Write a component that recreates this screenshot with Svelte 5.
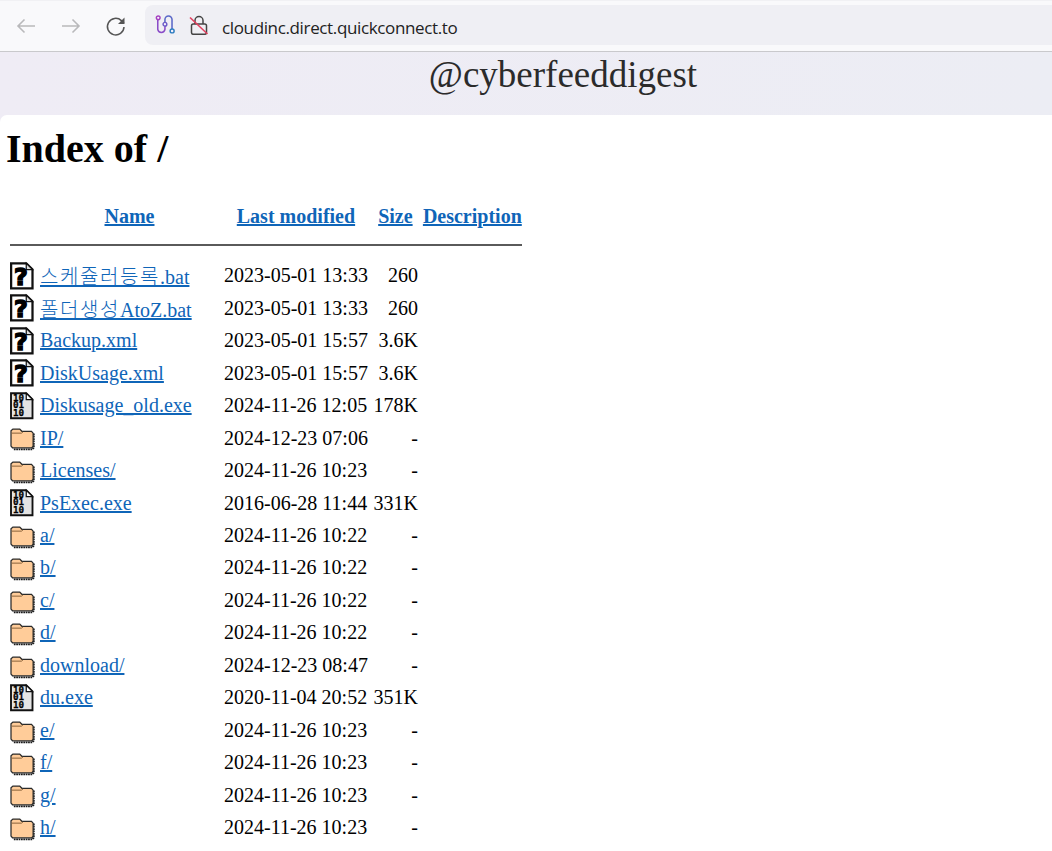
<script>
    const unknown = 'unknown', binary = 'binary', folder = 'folder';
    const rows = [
        { ko: '스케쥴러등록', name: '.bat', date: '2023-05-01 13:33', size: '260', icon: unknown },
        { ko: '폴더생성', name: 'AtoZ.bat', date: '2023-05-01 13:33', size: '260', icon: unknown },
        { name: 'Backup.xml', date: '2023-05-01 15:57', size: '3.6K', icon: unknown },
        { name: 'DiskUsage.xml', date: '2023-05-01 15:57', size: '3.6K', icon: unknown },
        { name: 'Diskusage_old.exe', date: '2024-11-26 12:05', size: '178K', icon: binary },
        { name: 'IP/', date: '2024-12-23 07:06', size: '-', icon: folder },
        { name: 'Licenses/', date: '2024-11-26 10:23', size: '-', icon: folder },
        { name: 'PsExec.exe', date: '2016-06-28 11:44', size: '331K', icon: binary },
        { name: 'a/', date: '2024-11-26 10:22', size: '-', icon: folder },
        { name: 'b/', date: '2024-11-26 10:22', size: '-', icon: folder },
        { name: 'c/', date: '2024-11-26 10:22', size: '-', icon: folder },
        { name: 'd/', date: '2024-11-26 10:22', size: '-', icon: folder },
        { name: 'download/', date: '2024-12-23 08:47', size: '-', icon: folder },
        { name: 'du.exe', date: '2020-11-04 20:52', size: '351K', icon: binary },
        { name: 'e/', date: '2024-11-26 10:23', size: '-', icon: folder },
        { name: 'f/', date: '2024-11-26 10:23', size: '-', icon: folder },
        { name: 'g/', date: '2024-11-26 10:23', size: '-', icon: folder },
        { name: 'h/', date: '2024-11-26 10:23', size: '-', icon: folder }
    ];
</script>

<div class="page">
    <div class="toolbar">
        <div class="nav">
            <svg class="btn" viewBox="0 0 24 24"><path d="M21 12H4M10.500 5.500 4 12l6.500 6.500" class="off" /></svg>
            <svg class="btn" viewBox="0 0 24 24"><path d="M3 12h17M13.500 5.500 20 12l-6.500 6.500" class="off" /></svg>
            <svg class="btn" viewBox="0 0 24 24"><path d="M20 13a8.300 8.300 0 1 1-2.600-6.400L20 9" class="on" /><path d="M20.500 3.500V10H14z" fill="#555" /></svg>
        </div>
        <div class="omnibox">
            <svg class="flow" viewBox="0 0 18 19">
                <path d="M2 5.500V14a3.300 3.300 0 0 0 6.500 0v-3" fill="none" stroke="#8a4cc8" stroke-width="1.400" />
                <path d="M8.500 7.500V5a3.200 3.200 0 0 1 6.400 0v8.500" fill="none" stroke="#5a68c8" stroke-width="1.400" />
                <circle cx="2.400" cy="3.500" r="1.700" fill="#f5f0fa" stroke="#a43fc0" stroke-width="1.300" />
                <circle cx="8.500" cy="9.300" r="1.700" fill="#f5f0fa" stroke="#6a5ac8" stroke-width="1.300" />
                <circle cx="15" cy="15.300" r="1.800" fill="#f5f0fa" stroke="#2c7cc0" stroke-width="1.300" />
            </svg>
            <svg class="lock" viewBox="0 0 20 20">
                <rect x="2.500" y="9" width="15" height="10.300" rx="1.800" fill="none" stroke="#444" stroke-width="1.500" />
                <path d="M6 9V5.500a4 4 0 0 1 8 0V9" fill="none" stroke="#444" stroke-width="1.500" />
                <path d="M1 2.500 18.500 19" stroke="#e0405f" stroke-width="1.600" />
            </svg>
            <span class="url">cloudinc.direct.quickconnect.to</span>
        </div>
    </div>

    <div class="banner">@cyberfeeddigest</div>

    <main class="sheet">
        <h1>Index of /</h1>
        <table>
            <thead>
                <tr class="head">
                    <th></th>
                    <th><a href="#n">Name</a></th>
                    <th><a href="#m">Last modified</a></th>
                    <th><a href="#s">Size</a></th>
                    <th><a href="#d">Description</a></th>
                </tr>
                <tr><th colspan="5" class="rule"><hr /></th></tr>
            </thead>
            <tbody>
                {#each rows as row}
                    <tr class="row">
                        <td class="ico">
                            {#if row.icon === 'folder'}
                                <svg viewBox="0 0 20 22">
                                    <path d="M19 7.500V19l-1.200 1.300H3" fill="none" stroke="#1a1a1a" stroke-width="1.500" stroke-dasharray="1.400 .5" />
                                    <path d="M.8 7V5.500L2.300 4h5.500l1.700 1.800h7.700l1.300 1.500v10.500l-1 1.200H2l-1.200-1.300z" fill="#ffcc99" stroke="#2a2a2a" stroke-width="1" />
                                    <path d="M1.500 7.300h7.700l1.200-1" fill="none" stroke="#8a6238" stroke-width=".8" />
                                </svg>
                            {:else if row.icon === 'binary'}
                                <svg viewBox="0 0 20 22">
                                    <path d="M.8 1h12.200l5 5v15H.8z" fill="#e4e4e4" stroke="#111" stroke-width="1.500" />
                                    <path d="M13 1v5h5z" fill="#fff" stroke="#111" stroke-width="1" />
                                    <text x="2.400" y="6.800" class="bits">10</text>
                                    <text x="2.400" y="12.900" class="bits">01</text>
                                    <text x="2.400" y="19.300" class="bits">10</text>
                                </svg>
                            {:else}
                                <svg viewBox="0 0 20 22">
                                    <path d="M.9 1h12.100l5 5v15H.9z" fill="#fff" stroke="#111" stroke-width="1.800" />
                                    <path d="M13 1v5h5z" fill="#ddd" stroke="#111" stroke-width="1" />
                                    <text x="8.800" y="18.300" class="q">?</text>
                                </svg>
                            {/if}
                        </td>
                        <td class="name"><a href="#f">{#if row.ko}<span class="ko">{row.ko}</span>{/if}{row.name}</a></td>
                        <td class="date">{row.date}</td>
                        <td class="size">{row.size}</td>
                        <td></td>
                    </tr>
                {/each}
            </tbody>
        </table>
    </main>
</div>

<style>
    :global(body) {
        margin: 0;
        overflow: hidden;
    }

    .page {
        height: 851px;
        overflow: hidden;
        background: linear-gradient(90deg, #efecf5, #ecedf4);
        font-family: "Liberation Serif", serif;
    }

    .toolbar {
        display: flex;
        align-items: center;
        height: 52px;
        box-sizing: border-box;
        background: #f9f9fb;
        border-top: 1px solid #f1f1f4;
        border-bottom: 1px solid #c9c9cc;
    }

    .nav {
        display: flex;
        gap: 21px;
        padding-left: 14px;
        width: 145px;
        box-sizing: border-box;
    }

    .btn {
        width: 24px;
        height: 24px;
        fill: none;
    }

    .off {
        stroke: #b9b9bb;
        stroke-width: 1.600;
    }

    .on {
        stroke: #555;
        stroke-width: 1.500;
    }

    .omnibox {
        flex: 1;
        height: 40px;
        margin-bottom: 3px;
        display: flex;
        align-items: center;
        gap: 13px;
        padding-left: 10px;
        background: #efeff4;
        border-radius: 8px 0 0 8px;
    }

    .flow {
        width: 21px;
        height: 21px;
    }

    .lock {
        width: 20px;
        height: 20px;
    }

    .url {
        padding-top: 6px;
        font-family: "Open Sans", sans-serif;
        font-size: 17px;
        color: #222;
        letter-spacing: -0.36px;
    }

    .banner {
        height: 63px;
        padding-left: 74px;
        text-align: center;
        font-size: 37px;
        line-height: 45px;
        color: #2b2b2b;
    }

    .sheet {
        background: #fff;
        border-radius: 7px 0 0 0;
        height: 740px;
        padding: 1px 0 0 5px;
    }

    h1 {
        margin: 11px 0 22px 1px;
        font-size: 40px;
        line-height: 44px;
        color: #000;
    }

    table {
        border-collapse: separate;
        border-spacing: 5px 0;
        font-size: 20px;
        color: #000;
    }

    a {
        color: #0f65b8;
    }

    .head th {
        height: 46px;
        font-weight: bold;
        padding: 0;
    }

    .rule {
        padding: 0;
        height: 20.500px;
        vertical-align: top;
    }

    hr {
        margin: 5px 0 0;
        border: 0;
        border-top: 2px solid #5a5a5a;
    }

    .row {
        height: 32.470px;
    }

    .row td {
        padding: 0;
        white-space: nowrap;
    }

    .ico {
        width: 25px;
    }

    .ico svg {
        display: block;
        width: 25px;
        height: 27.500px;
        overflow: visible;
    }

    .name {
        width: 179px;
    }

    .date {
        width: 143px;
    }

    .size {
        width: 45px;
        text-align: right;
    }

    .ko {
        font-family: "Noto Sans CJK KR", sans-serif;
        font-weight: 300;
        letter-spacing: 0.08em;
    }

    .q {
        font-family: "DejaVu Sans", sans-serif;
        font-weight: bold;
        font-size: 19px;
        text-anchor: middle;
        fill: #000;
        stroke: #000;
        stroke-width: 1.200px;
    }

    .bits {
        font-family: "DejaVu Sans Mono", monospace;
        font-weight: bold;
        font-size: 7.400px;
        fill: #000;
        stroke: #000;
        stroke-width: 0.2px;
    }
</style>
